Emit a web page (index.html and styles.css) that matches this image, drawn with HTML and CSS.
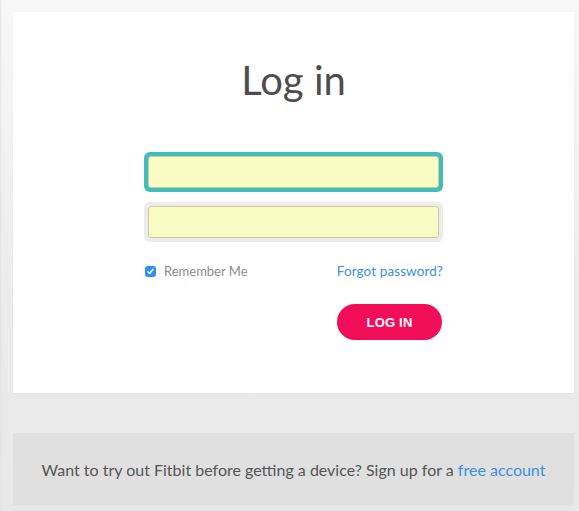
FILE: index.html
```html
<!DOCTYPE html>
<html lang="en">
<head>
<meta charset="utf-8">
<title>Log in</title>
<link rel="stylesheet" href="styles.css">
</head>
<body>
<div class="page">
  <main class="card">
    <h1 class="title">Log in</h1>
    <form class="form">
      <div class="field field-focus"><input class="input" type="text" aria-label="Email"></div>
      <div class="field"><input class="input" type="password" aria-label="Password"></div>
      <div class="row">
        <label class="remember">
          <span class="check"><svg width="12" height="12" viewBox="0 0 12 12"><path d="M3.2 6.2 L5.1 8.2 L8.8 3.6" fill="none" stroke="#fff" stroke-width="1.6" stroke-linecap="round" stroke-linejoin="round"/></svg></span>
          <span>Remember Me</span>
        </label>
        <a class="link forgot" href="#">Forgot password?</a>
      </div>
      <div class="actions">
        <button class="btn" type="button">LOG IN</button>
      </div>
    </form>
  </main>
  <footer class="footer">
    <p class="footer-text">Want to try out Fitbit before getting a device? Sign up for a <a class="link" href="#">free account</a></p>
  </footer>
</div>
</body>
</html>
```

FILE: styles.css
```css
html, body {
  margin: 0;
  height: 100%;
}
body {
  background: linear-gradient(to bottom, #f8f8f8 0%, #ececec 60%, #e8e8e8 100%);
  font-family: Lato, "Open Sans", "Liberation Sans", sans-serif;
  overflow: hidden;
}
.page {
  width: 579px;
  padding: 12px 5px 6px 13px;
  display: flex;
  flex-direction: column;
  gap: 40px;
  box-shadow: inset 3px 0 2px -2px #e2e2e2;
  min-height: 100%;
  box-sizing: border-box;
}
.card {
  width: 561px;
  background: #fff;
  padding: 44px 0 53px;
  box-shadow: 0 1px 3px rgba(0,0,0,0.03);
}
.title {
  margin: 0;
  text-align: center;
  font-weight: 400;
  font-size: 40px;
  line-height: 48px;
  color: #4d4d4d;
}
.form {
  width: 299px;
  margin: 48px auto 0;
  display: flex;
  flex-direction: column;
}
.field {
  padding: 4px;
  border-radius: 6px;
  background: #ececec;
  height: 40px;
  box-sizing: border-box;
}
.field + .field {
  margin-top: 10px;
}
.field-focus {
  background: #3fbdb9;
}
.input {
  display: block;
  width: 100%;
  height: 32px;
  box-sizing: border-box;
  border: 1px solid #cfcc9c;
  border-radius: 3px;
  background: #fafcc6;
  outline: none;
  padding: 0 8px;
}
.row {
  margin-top: 21px;
  height: 16px;
  display: flex;
  align-items: center;
  justify-content: space-between;
  font-size: 13px;
}
.remember {
  display: flex;
  align-items: center;
  gap: 8px;
  color: #8c8c8c;
  padding-left: 1px;
}
.check {
  width: 11px;
  height: 11px;
  border-radius: 3px;
  background: #2f8ff3;
  display: flex;
  align-items: center;
  justify-content: center;
}
.check svg {
  width: 11px;
  height: 11px;
}
.link {
  color: #3a8fe0;
  text-decoration: none;
}
.forgot {
  font-size: 13.5px;
  letter-spacing: 0.1px;
}
.actions {
  margin-top: 25px;
  display: flex;
  justify-content: flex-end;
  padding-right: 1px;
}
.btn {
  width: 105px;
  height: 36px;
  border: none;
  border-radius: 18px;
  background: #f20d58;
  color: #fff;
  font-family: "Liberation Sans", Arial, sans-serif;
  font-weight: 700;
  font-size: 13px;
  letter-spacing: 0.2px;
  padding: 0;
}
.footer {
  width: 561px;
  background: #e0e0e0;
  height: 72px;
  display: flex;
  align-items: center;
  justify-content: center;
}
.footer-text {
  margin: 0;
  font-size: 16px;
  color: #555;
}
```
